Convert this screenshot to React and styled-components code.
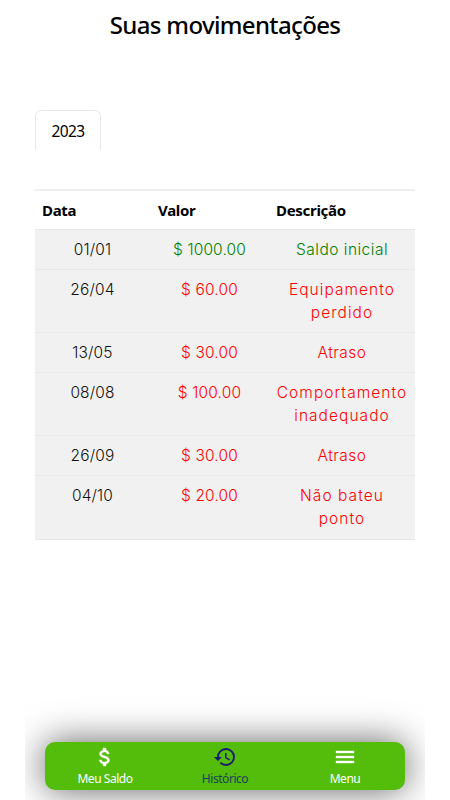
import React from 'react';
import styled, { createGlobalStyle } from 'styled-components';
import { MdAttachMoney, MdHistory, MdMenu } from 'react-icons/md';

const colors = {
  green: '#54bc0b',
  active: '#191970',
  activeLabel: '#21405a',
  credit: 'green',
  debit: 'red',
  border: '#e6e8ea',
  row: '#f1f1f1',
};

const GlobalStyle = createGlobalStyle`
  * {
    box-sizing: border-box;
  }

  body {
    margin: 0;
    background: #fff;
    color: #000;
    font-family: 'Noto Sans', 'Open Sans', sans-serif;
  }
`;

const Page = styled.div`
  height: 800px;
  display: flex;
  flex-direction: column;
  padding: 0 25px;
`;

const Title = styled.h1`
  margin: 10px 0 0;
  font-size: 24px;
  font-weight: 500;
  line-height: 30px;
  letter-spacing: -0.65px;
  text-align: center;
`;

const Content = styled.main`
  flex: 1;
  padding: 70px 10px 0;
`;

const Tabs = styled.div`
  display: flex;
  height: 40px;
`;

const Tab = styled.button`
  width: 66px;
  padding: 0;
  border: 1px solid #e6e8ec;
  border-bottom: 0;
  border-radius: 6px 6px 0 0;
  background: #fff;
  color: #000;
  font-family: inherit;
  font-size: 15.5px;
  letter-spacing: -0.6px;
`;

const Table = styled.table`
  width: 380px;
  margin-top: 39px;
  border-collapse: separate;
  border-spacing: 0;
  border-top: 2px solid #eeeeef;
  table-layout: fixed;
`;

const HeadCell = styled.th`
  width: ${({ $width }) => $width}px;
  height: 39px;
  padding: 0 7px;
  border-bottom: 1px solid ${colors.border};
  font-size: 15px;
  font-weight: 700;
  letter-spacing: -0.3px;
  text-align: left;
`;

const Row = styled.tr`
  height: ${({ $tall }) => ($tall ? 63 : 40)}px;

  &:last-child {
    height: 64px;
  }
`;

const Cell = styled.td`
  padding: 8px 7px 0 6px;
  border-bottom: 1px solid ${colors.border};
  background: ${colors.row};
  color: ${({ $color }) => $color || '#111'};
  font-family: Inter, 'Noto Sans', sans-serif;
  font-size: 15.5px;
  font-weight: 300;
  line-height: 23px;
  letter-spacing: ${({ $spacing }) => $spacing || 0.15}px;
  text-align: center;
  vertical-align: top;
  white-space: pre-line;

  &:last-child {
    padding: 8px 6px 0;
  }
`;

const Footer = styled.footer`
  height: 110px;
  padding: 52px 20px 10px;
  overflow: hidden;
`;

const Nav = styled.nav`
  display: grid;
  grid-template-columns: repeat(3, 1fr);
  height: 48px;
  border-radius: 10px;
  background: ${colors.green};
  box-shadow: 0 0 36px rgba(0, 0, 0, 0.62);
`;

const NavItem = styled.a`
  display: flex;
  flex-direction: column;
  align-items: center;
  padding-top: 3px;
  color: ${({ $active }) => ($active ? colors.activeLabel : '#fff')};
  font-size: 12px;
  line-height: 20px;
  letter-spacing: -0.45px;

  svg {
    color: ${({ $active }) => ($active ? colors.active : '#fff')};
    font-size: 24px;
  }

  path:not([fill='none']) {
    stroke: currentColor;
    stroke-width: ${({ $active }) => ($active ? 0 : 0.4)};
  }
`;

const movements = [
  { date: '01/01', value: '1000.00', description: 'Saldo inicial', credit: true },
  { date: '26/04', value: '60.00', description: 'Equipamento\nperdido', tall: true },
  { date: '13/05', value: '30.00', description: 'Atraso' },
  { date: '08/08', value: '100.00', description: 'Comportamento\ninadequado', tall: true },
  { date: '26/09', value: '30.00', description: 'Atraso' },
  { date: '04/10', value: '20.00', description: 'Não bateu\nponto', tall: true },
];

const Movements = () => (
  <Table>
    <thead>
      <tr>
        <HeadCell $width={116}>Data</HeadCell>
        <HeadCell $width={118}>Valor</HeadCell>
        <HeadCell $width={146}>Descrição</HeadCell>
      </tr>
    </thead>
    <tbody>
      {movements.map(({ date, value, description, credit, tall }) => {
        const color = credit ? colors.credit : colors.debit;
        return (
          <Row key={date} $tall={tall}>
            <Cell>{date}</Cell>
            <Cell $color={color}>$ {value}</Cell>
            <Cell $color={color} $spacing={tall ? 1.05 : 0.5}>{description}</Cell>
          </Row>
        );
      })}
    </tbody>
  </Table>
);

const App = () => {
  return (
    <>
      <GlobalStyle />
      <Page>
        <Title>Suas movimentações</Title>
        <Content>
          <Tabs>
            <Tab>2023</Tab>
          </Tabs>
          <Movements />
        </Content>
        <Footer>
          <Nav>
            <NavItem>
              <MdAttachMoney />
              Meu Saldo
            </NavItem>
            <NavItem $active>
              <MdHistory />
              Histórico
            </NavItem>
            <NavItem>
              <MdMenu />
              Menu
            </NavItem>
          </Nav>
        </Footer>
      </Page>
    </>
  );
};

export default App;
